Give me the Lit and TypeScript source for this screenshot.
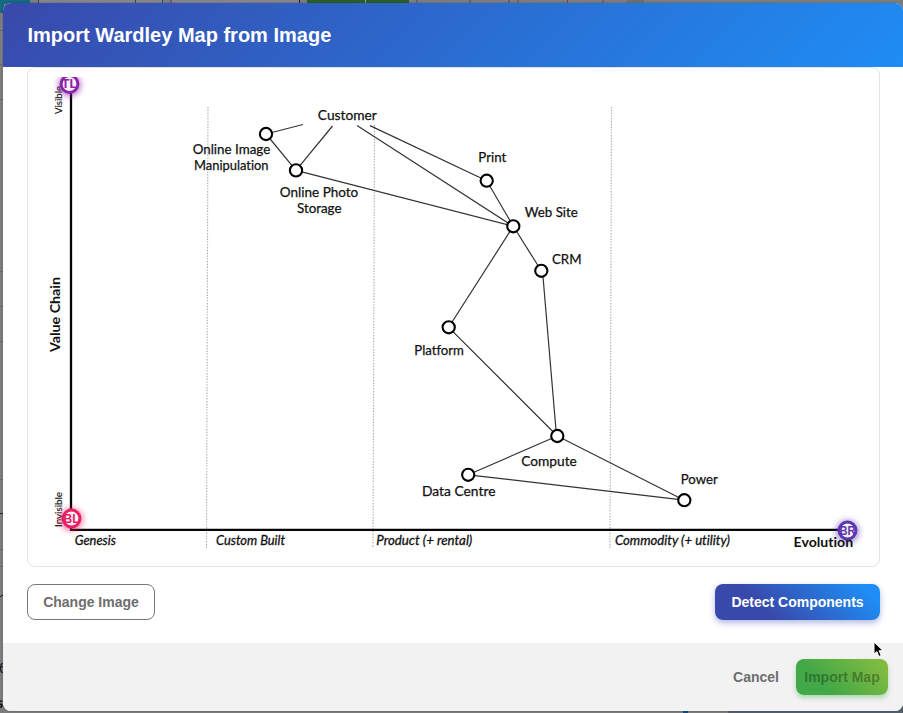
import { LitElement, html, css, svg } from "lit";
import { customElement } from "lit/decorators.js";

type Point = [number, number];

const nodes: Point[] = [
  [266, 134], [296, 170.4], [486.7, 180.7], [513.3, 226.3], [541.3, 270.8],
  [448.7, 327.3], [557.3, 436], [468.2, 474.8], [684.3, 500.2],
];

const links: [number, number, number, number][] = [
  [266, 134, 303, 124.5],
  [266, 134, 296, 170.4],
  [296, 170.4, 332.5, 126],
  [296, 170.4, 513.3, 226.3],
  [357, 125.6, 513.3, 226.3],
  [370, 125.6, 486.7, 180.7],
  [486.7, 180.7, 513.3, 226.3],
  [513.3, 226.3, 541.3, 270.8],
  [513.3, 226.3, 448.7, 327.3],
  [448.7, 327.3, 557.3, 436],
  [542.5, 270.8, 556.5, 436],
  [557.3, 436, 468.2, 474.8],
  [557.3, 436, 684.3, 500.2],
  [468.2, 474.8, 684.3, 500.2],
];

/* text, left edge, baseline, drawn width */
const labels: [string, number, number, number][] = [
  ["Customer", 317.8, 120, 59],
  ["Online Image", 192.7, 154, 77.5],
  ["Manipulation", 194, 170, 74.5],
  ["Online Photo", 279.8, 197, 78.5],
  ["Storage", 297, 213, 44.5],
  ["Print", 478.3, 162, 28],
  ["Web Site", 524.8, 217, 53],
  ["CRM", 552, 264.3, 29.5],
  ["Platform", 414.3, 355.3, 49.5],
  ["Compute", 521.3, 466.3, 55.5],
  ["Data Centre", 422, 496.3, 73.5],
  ["Power", 680.8, 484, 37],
];

const stages: [string, number, number][] = [
  ["Genesis", 74.8, 41],
  ["Custom Built", 216, 69],
  ["Product (+ rental)", 376.3, 96],
  ["Commodity (+ utility)", 615, 115],
];

@customElement("wardley-map")
export class WardleyMap extends LitElement {
  static styles = css`
    :host { display: block; }
    svg { display: block; width: 850px; height: 498px; }
    text { font-family: Lato, "Gill Sans", sans-serif; font-variant-ligatures: none; fill: #111; }
    .name { font-size: 13.6px; font-weight: 400; stroke: #111; stroke-width: 0.25; }
    .stage { font-size: 13px; font-weight: 400; font-style: italic; stroke: #111; stroke-width: 0.3; }
    .side { font-size: 10px; stroke: #111; stroke-width: 0.15; }
    .strong { font-size: 13px; font-weight: 700; }
    .link { stroke: #333; stroke-width: 1.2; }
    .node { fill: #fff; stroke: #000; stroke-width: 2.1; }
    .divider { stroke: #aaa; stroke-width: 1.1; stroke-dasharray: 1.4 1.4; }
    .axis { fill: none; stroke: #050505; stroke-width: 2.3; }
    .tl { color: #8e24aa; }
    .bl { color: #e91e63; }
    .br { color: #5e35b1; }
    .ring { fill: #fff; fill-opacity: 0.9; stroke: currentColor; stroke-width: 3; }
    .glow { fill: currentColor; filter: blur(3px); opacity: 0.65; }
    .tag { font: 700 12px "Liberation Sans", sans-serif; text-anchor: middle; fill: currentColor; }
  `;

  private marker(kind: string, text: string, x: number, y: number) {
    return svg`<g class=${kind}>
      <circle class="glow" cx=${x} cy=${y + 1} r="11"></circle>
      <circle class="ring" cx=${x} cy=${y} r="8.4"></circle>
      <clipPath id="clip-${kind}"><circle cx=${x} cy=${y} r="9"></circle></clipPath>
      <text class="tag" x=${x} y=${y + 4} textLength="16" lengthAdjust="spacingAndGlyphs"
        clip-path="url(#clip-${kind})">${text}</text>
    </g>`;
  }

  render() {
    return html`<svg viewBox="28 68 850 498">
      <clipPath id="image-area"><rect x="36" y="77" width="840" height="482"></rect></clipPath>
      <g clip-path="url(#image-area)">
        <path class="divider" d="M208 107L206.5 548M374.5 125L373 548M611.5 107L610 548"></path>
        <path class="axis" d="M71 80V529.8H848"></path>
        ${links.map(([a, b, c, d]) => svg`<line class="link" x1=${a} y1=${b} x2=${c} y2=${d}></line>`)}
        ${nodes.map(([x, y]) => svg`<circle class="node" cx=${x} cy=${y} r="6.1"></circle>`)}
        ${labels.map(([t, x, y, w]) => svg`<text class="name" x=${x} y=${y} textLength=${w} lengthAdjust="spacingAndGlyphs">${t}</text>`)}
        ${stages.map(([t, x, w]) => svg`<text class="stage" x=${x} y="545" textLength=${w} lengthAdjust="spacingAndGlyphs">${t}</text>`)}
        <text class="side" transform="translate(62 114) rotate(-90)" textLength="28" lengthAdjust="spacingAndGlyphs">Visible</text>
        <text class="side" transform="translate(62 527) rotate(-90)" textLength="35" lengthAdjust="spacingAndGlyphs">Invisible</text>
        <text class="strong" transform="translate(59.5 352) rotate(-90)" textLength="75" lengthAdjust="spacingAndGlyphs">Value Chain</text>
        ${this.marker("tl", "TL", 69.5, 84)}
        ${this.marker("bl", "BL", 71.5, 518.5)}
        ${this.marker("br", "BR", 847.5, 530.5)}
        <text class="strong" x="793.6" y="546.7" textLength="59.5" lengthAdjust="spacingAndGlyphs">Evolution</text>
      </g>
    </svg>`;
  }
}

@customElement("app-root")
export class AppRoot extends LitElement {
  static styles = css`
    :host {
      display: block; position: relative; width: 903px; height: 713px; overflow: hidden;
      background: #7d7d7d; font-family: "Liberation Sans", Arial, sans-serif;
    }
    * { box-sizing: border-box; }
    .backdrop { position: absolute; inset: 0; }
    .backdrop text { font-family: "Liberation Sans", sans-serif; fill: #161616; }
    .shell { padding: 3px 0 0 3px; }
    .dialog {
      position: relative; display: flex; flex-direction: column;
      width: 900px; height: 708px;
      border-radius: 8px; overflow: hidden; background: #fff;
      box-shadow: 0 0 2px #0005;
    }
    header {
      flex: none; height: 64px; padding: 0 24px; display: flex; align-items: center;
      background: linear-gradient(135deg, #3949ab, #1e8df5);
    }
    h1 { margin: 0; padding-left: 0.5px; font-size: 20px; line-height: 24px; font-weight: 700; color: #fff; white-space: nowrap; }
    main { flex: 1; padding: 0 24px; }
    .frame { width: 853px; height: 500px; border: 1px solid #e2e2e2; border-radius: 8px; }
    .actions { display: flex; justify-content: space-between; width: 853px; margin-top: 17px; }
    footer {
      flex: none; height: 68px; padding: 0 15px; display: flex; align-items: center;
      justify-content: flex-end; background: #f2f2f2;
    }
    button {
      height: 36px; padding: 0; border: 0; border-radius: 8px; background: none;
      font: 700 14px "Liberation Sans", Arial, sans-serif; white-space: nowrap;
    }
    .change { width: 128px; color: #6e6e6e; border: 1px solid #777; background: #fff; }
    .detect {
      width: 165px; color: #fff; background: linear-gradient(45deg, #3949ab 30%, #1e8df5 90%);
      box-shadow: 0 3px 6px #3f51b566;
    }
    .cancel { width: 80px; color: #6e6e6e; }
    .import {
      width: 92px; color: #00000052; background: linear-gradient(45deg, #43a847 30%, #80bb40 90%);
      box-shadow: 0 3px 5px #4caf5066;
    }
    .cursor { position: absolute; left: 873px; top: 641px; }
  `;

  render() {
    return html`
      <svg class="backdrop" width="903" height="713">
        <path fill="#126a83" d="M0 0h30v4H4v9H0z"></path>
        <path fill="#85858a" d="M39 0h123v4H39zM172 0h127v4H172z"></path>
        <path stroke="#1d4e75" d="M38.5 0v4M135.5 0v4M162.5 0v4"></path>
        <path stroke="#51446c" d="M171 0v4M417 0v4M470 0v4M509 0v4"></path>
        <path stroke="#873f3a" d="M518 0v4M567.5 0v4M603 0v4"></path>
        <path stroke="#202020" d="M299.5 0v4"></path>
        <path fill="#295f25" d="M307 0h102v4H307z"></path>
        <path stroke="#91a18e" d="M365.5 0v4"></path>
        <path fill="#707070" d="M627 0h17v4h-17z"></path>
        <path stroke="#686868" d="M0 30.5h4M0 64.5h4M0 99.5h4M0 271.5h4M0 306.5h4M0 341.5h4M0 479.5h4M0 549.5h4M0 566.5h4"></path>
        <path stroke="#202a32" d="M0 513.5h4M0 597q1-2 4-2"></path>
        <text x="-1" y="673" font-size="14">6</text>
        <text x="-5" y="708" font-size="15" font-weight="700">s</text>
        <path fill="#56606a" d="M728 700h175v13H728z"></path>
        <path fill="#174b7c" d="M683 711h5v2h-5z"></path>
      </svg>
      <div class="shell">
        <section class="dialog">
          <header><h1>Import Wardley Map from Image</h1></header>
          <main>
            <div class="frame"><wardley-map></wardley-map></div>
            <div class="actions">
              <button class="change">Change Image</button>
              <button class="detect">Detect Components</button>
            </div>
          </main>
          <footer>
            <button class="cancel">Cancel</button>
            <button class="import">Import Map</button>
          </footer>
        </section>
      </div>
      <svg class="cursor" width="12" height="18" viewBox="0 0 12 18">
        <path d="M1 1v12.2l2.8-2.6 2.1 4.9 2.3-1-2.1-4.8h4z" fill="#000" stroke="#fff" stroke-width="1"></path>
      </svg>
    `;
  }
}
